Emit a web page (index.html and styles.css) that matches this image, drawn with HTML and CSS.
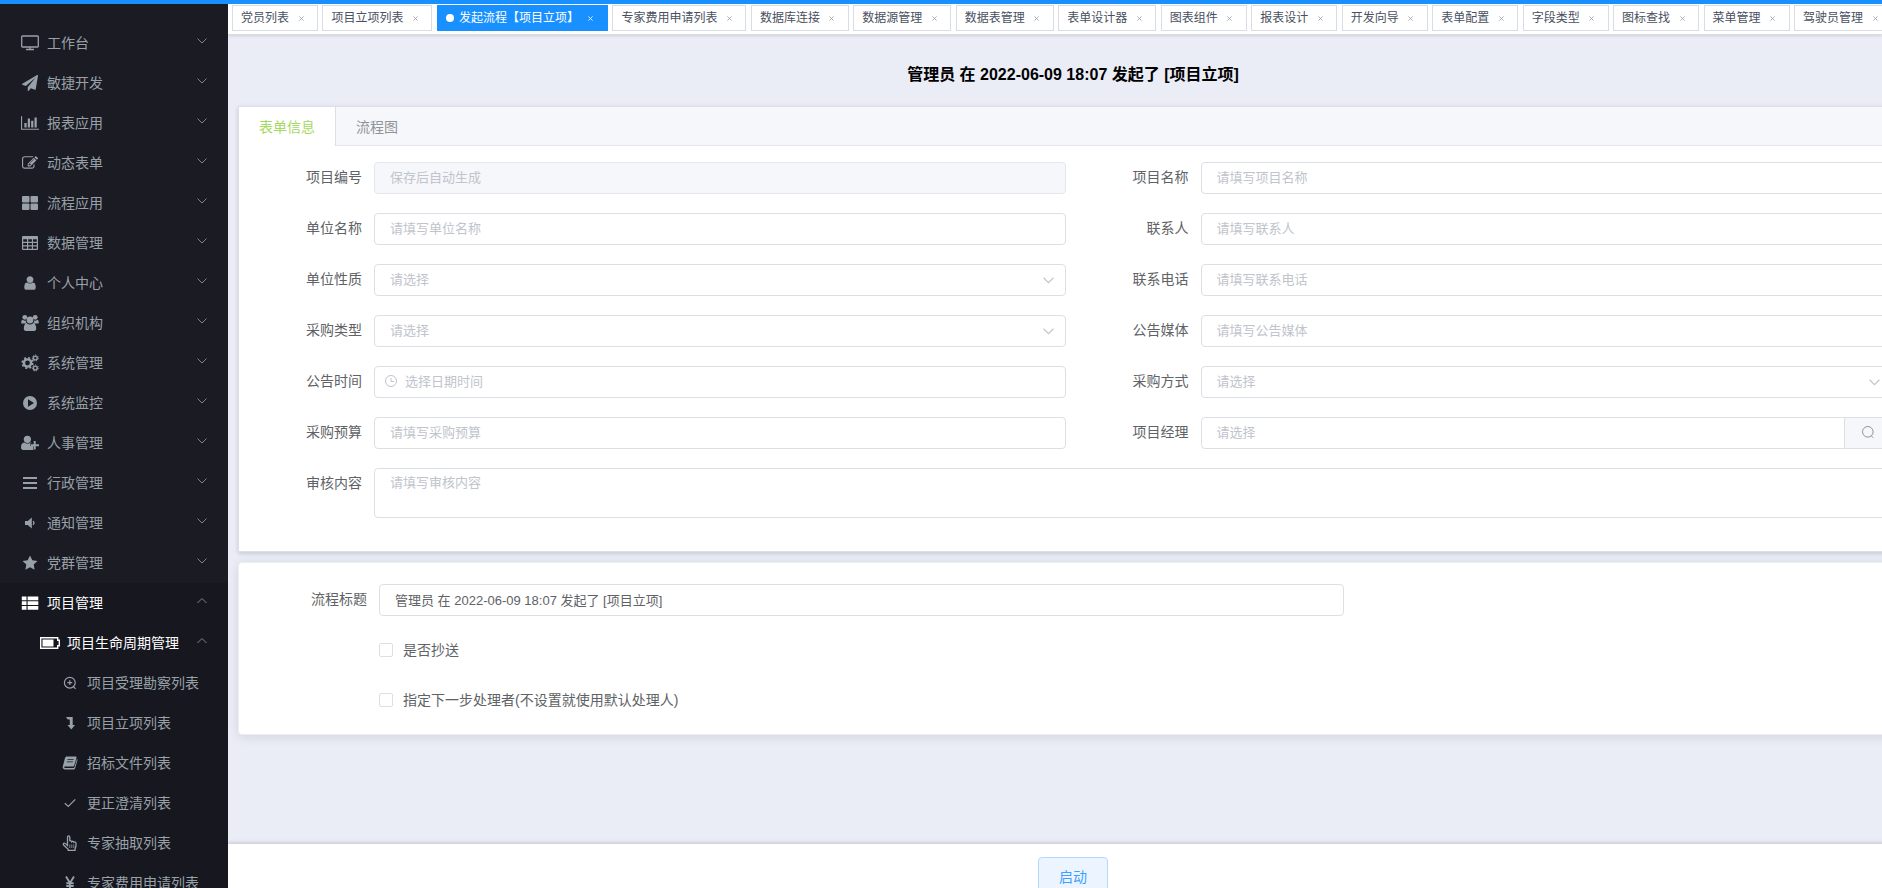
FILE: index.html
```html
<!DOCTYPE html>
<html lang="zh-CN">
<head>
  <meta charset="UTF-8" />
  <meta name="viewport" content="width=device-width, initial-scale=1.0"/>
  <title>发起流程【项目立项】</title>
  <link rel="stylesheet" href="styles.css">
</head>
<body>
  <svg class="sprite" aria-hidden="true">
    <symbol id="down" viewBox="0 0 10 6"><path d="M.5.5L5 5 9.500.5" fill="none" stroke="currentColor"/></symbol>
    <symbol id="up" viewBox="0 0 10 6"><path d="M.5 5L5 .5 9.500 5" fill="none" stroke="currentColor"/></symbol>
    <symbol id="close" viewBox="0 0 6 6"><path d="M.5.5l5 5M5.500.5l-5 5" fill="none" stroke="currentColor"/></symbol>
    <symbol id="search" viewBox="0 0 14 14"><circle cx="6.800" cy="6.800" r="5.300" fill="none" stroke="currentColor"/><path d="M10.300 10.800l2 2" fill="none" stroke="currentColor"/></symbol>
    <symbol id="clock" viewBox="0 0 14 14"><path d="M7 1.500a5.500 5.500 0 1 0 0 11a5.500 5.500 0 0 0 0-11M7 4v3.500h3" fill="none" stroke="currentColor"/></symbol>
  </svg>

  <div class="topbar"></div>
  <div class="app">
    <nav class="sidebar">
      <a href="#" class="item"><svg class="icon" viewBox="0 0 18 18"><path d="M1.500 2h15a.8.8 0 0 1 .8.8v9.400a.8.8 0 0 1-.8.8h-15a.8.8 0 0 1-.8-.8V2.800a.8.8 0 0 1 .8-.8zM9 13v2.500M5 15.500h8" fill="none" stroke="currentColor" stroke-width="1.300"/></svg><span>工作台</span><svg class="arrow"><use href="#down"/></svg></a>
      <a href="#" class="item"><svg class="icon fa" viewBox="0 0 1792 1792"><path d="M1764 11q33 24 27 64l-256 1536q-5 29-32 45-14 8-31 8-11 0-24-5l-453-185-242 295q-18 23-49 23-13 0-22-4-19-7-30.500-23.500t-11.500-36.500v-349l864-1059-1069 925-395-162q-37-14-40-55-2-40 32-59l1664-960q15-9 32-9 20 0 36 11z"/></svg><span>敏捷开发</span><svg class="arrow"><use href="#down"/></svg></a>
      <a href="#" class="item"><svg class="icon" viewBox="0 0 2048 1792"><path d="M640 896v512h-256v-512h256zm384-512v1024h-256v-1024h256zm1024 1152v128h-2048v-1536h128v1408h1920zm-640-896v768h-256v-768h256zm384-384v1152h-256v-1152h256z"/></svg><span>报表应用</span><svg class="arrow"><use href="#down"/></svg></a>
      <a href="#" class="item"><svg class="icon fa" viewBox="0 0 1792 1792"><path d="M888 1184l116-116-152-152-116 116v56h96v96h56zm440-720q-16-16-33 1l-350 350q-17 17-1 33t33-1l350-350q17-17 1-33zm80 594v190q0 119-84.500 203.500t-203.500 84.500h-832q-119 0-203.500-84.500t-84.500-203.500v-832q0-119 84.500-203.500t203.500-84.500h832q63 0 117 25 15 7 18 23 3 17-9 29l-49 49q-14 14-32 8-23-6-45-6h-832q-66 0-113 47t-47 113v832q0 66 47 113t113 47h832q66 0 113-47t47-113v-126q0-13 9-22l64-64q15-15 35-7t20 29zm-96-738l288 288-672 672h-288v-288zm444 132l-92 92-288-288 92-92q28-28 68-28t68 28l152 152q28 28 28 68t-28 68z"/></svg><span>动态表单</span><svg class="arrow"><use href="#down"/></svg></a>
      <a href="#" class="item"><svg class="icon" viewBox="0 0 18 18"><rect x="1" y="2" width="7.500" height="6.500" rx="1"/><rect x="9.500" y="2" width="7.500" height="6.500" rx="1"/><rect x="1" y="9.500" width="7.500" height="6.500" rx="1"/><rect x="9.500" y="9.500" width="7.500" height="6.500" rx="1"/></svg><span>流程应用</span><svg class="arrow"><use href="#down"/></svg></a>
      <a href="#" class="item"><svg class="icon" viewBox="0 0 18 18"><path fill-rule="evenodd" d="M2 2h14a1 1 0 0 1 1 1v12a1 1 0 0 1-1 1H2a1 1 0 0 1-1-1V3a1 1 0 0 1 1-1zM2.200 5.200v2.500h3.800v-2.500zM7.200 5.200v2.500h3.700v-2.500zM12 5.200v2.500h3.800v-2.500zM2.200 8.900v2.300h3.800v-2.300zM7.200 8.900v2.300h3.700v-2.300zM12 8.900v2.300h3.800v-2.300zM2.200 12.400v2.400h3.800v-2.400zM7.200 12.400v2.400h3.700v-2.400zM12 12.400v2.400h3.800v-2.400z"/></svg><span>数据管理</span><svg class="arrow"><use href="#down"/></svg></a>
      <a href="#" class="item"><svg class="icon fa" viewBox="0 0 1792 1792"><path d="M1536 1399q0 109-62.500 187t-150.500 78h-854q-88 0-150.500-78t-62.500-187q0-85 8.500-160.500t31.500-152 58.500-131 94-89 134.500-34.500q131 128 313 128t313-128q76 0 134.500 34.500t94 89 58.500 131 31.500 152 8.500 160.500zm-256-887q0 159-112.500 271.500t-271.500 112.500-271.500-112.500-112.500-271.500 112.500-271.500 271.500-112.500 271.500 112.500 112.500 271.500z"/></svg><span>个人中心</span><svg class="arrow"><use href="#down"/></svg></a>
      <a href="#" class="item"><svg class="icon" viewBox="0 0 18 18"><circle cx="3.800" cy="3.300" r="2.400"/><circle cx="14.200" cy="3.300" r="2.400"/><circle cx="9" cy="6" r="3.400"/><path d="M.2 9c0-2 .6-3.200 1.600-3.200 1 .8 2 1 3 .7 0 1.300.4 2.200 1.100 3H1.600C.8 9.500.2 9.400.2 9zM17.800 9c0-2-.6-3.200-1.600-3.200-1 .8-2 1-3 .7 0 1.300-.4 2.200-1.100 3h4.300c.8 0 1.400-.1 1.400-.5zM5.800 9.300c2 1.700 4.400 1.700 6.400 0 2 0 3 2.400 3 5.500 0 1.300-.8 2.200-2 2.200H4.800c-1.200 0-2-.9-2-2.200 0-3.100 1-5.500 3-5.500z"/></svg><span>组织机构</span><svg class="arrow"><use href="#down"/></svg></a>
      <a href="#" class="item"><svg class="icon" viewBox="0 0 18 18" fill="none" stroke="currentColor"><circle cx="6.500" cy="9" r="3.600" stroke-width="2.400"/><circle cx="6.500" cy="9" r="5.300" stroke-width="1.600" stroke-dasharray="2.080"/><circle cx="14.300" cy="4" r="1.900" stroke-width="1.400"/><circle cx="14.300" cy="4" r="3" stroke-width="1" stroke-dasharray="1.350 1.340"/><circle cx="14.300" cy="14" r="1.900" stroke-width="1.400"/><circle cx="14.300" cy="14" r="3" stroke-width="1" stroke-dasharray="1.350 1.340"/></svg><span>系统管理</span><svg class="arrow"><use href="#down"/></svg></a>
      <a href="#" class="item"><svg class="icon" viewBox="0 0 18 18"><path fill-rule="evenodd" d="M9 2a7 7 0 1 0 0 14A7 7 0 0 0 9 2zM7 5.300L13 9l-6 3.700z"/></svg><span>系统监控</span><svg class="arrow"><use href="#down"/></svg></a>
      <a href="#" class="item"><svg class="icon" viewBox="0 0 18 18"><circle cx="6.400" cy="5.300" r="3.600"/><path d="M3.300 8.400c2 1.600 4.200 1.600 6.200 0 .8.100 1 .3 1.300.6H9.300v3.300h2.900V16H2.300C.9 16 0 15 0 13.500c0-3 1-5.100 3.300-5.100zM12.700 7h2v3.200H18v2h-3.300v3.300h-2v-3.300H9.800v-2h2.900z"/></svg><span>人事管理</span><svg class="arrow"><use href="#down"/></svg></a>
      <a href="#" class="item"><svg class="icon" viewBox="0 0 18 18"><path d="M2 3h14v2H2zM2 8h14v2H2zM2 13h14v2H2z"/></svg><span>行政管理</span><svg class="arrow"><use href="#down"/></svg></a>
      <a href="#" class="item"><svg class="icon" viewBox="0 0 18 18"><path d="M4 7h2.800l4-3.500v11L6.800 11H4z"/><path d="M12 7.300q2 1.700 0 3.400" fill="none" stroke="currentColor" stroke-width="1.300"/></svg><span>通知管理</span><svg class="arrow"><use href="#down"/></svg></a>
      <a href="#" class="item"><svg class="icon" viewBox="0 0 18 18"><path d="M9 1.500l2.300 4.800 5.200.7-3.800 3.600.9 5.200L9 13.300l-4.600 2.500.9-5.200L1.500 7l5.200-.7z"/></svg><span>党群管理</span><svg class="arrow"><use href="#down"/></svg></a>
      <div class="group">
        <a href="#" class="item active"><svg class="icon" viewBox="0 0 18 18"><path d="M.8 2.500h4.700v3.700H.8zM6.600 2.500h10.700v3.700H6.600zM.8 7.200h4.700v3.700H.8zM6.600 7.200h10.700v3.700H6.600zM.8 12h4.700v3.700H.8zM6.600 12h10.700v3.700H6.600z"/></svg><span>项目管理</span><svg class="arrow"><use href="#up"/></svg></a>
        <a href="#" class="item sub active"><svg class="icon wide" viewBox="0 0 22 14"><path d="M1.700 1.700h17v2.600h1.600v5.400h-1.600v2.600h-17z" fill="none" stroke="currentColor" stroke-width="1.400"/><path d="M3.500 3.500h11v7h-11z"/></svg><span>项目生命周期管理</span><svg class="arrow"><use href="#up"/></svg></a>
        <a href="#" class="item leaf"><svg class="icon" viewBox="0 0 18 18"><g fill="none" stroke="currentColor" stroke-width="1.200"><circle cx="8.800" cy="8.700" r="5.400"/><path d="M12.400 12.700l2.200 2.200M8.800 6.300v4.800M6.400 8.700h4.800"/></g></svg><span>项目受理勘察列表</span></a>
        <a href="#" class="item leaf"><svg class="icon" viewBox="0 0 18 18"><path d="M5 3h6.700v8H14l-3.700 4.500L6.500 11h2.300V5.500H6.800z"/></svg><span>项目立项列表</span></a>
        <a href="#" class="item leaf"><svg class="icon" viewBox="0 0 18 18"><path fill-rule="evenodd" d="M6 2.500h8.500c.9 0 1.200.6 1 1.400l-2.200 7.300c-.3.900-.7 1.300-1.600 1.300H3.800c-.8 0-.8 1.500.2 1.500h8.200c.7 0 1.100-.3 1.300-1l2.500-8c.6.300.6.900.4 1.500l-2.200 7.400c-.3.900-.9 1.600-2 1.600H4c-1.600 0-2.700-1.500-2.200-3L4 4c.3-.9.900-1.500 2-1.500zM6.700 5.200l-.3.900h6l.3-.9zM6 7.400l-.3.900h6l.3-.9z"/></svg><span>招标文件列表</span></a>
        <a href="#" class="item leaf"><svg class="icon" viewBox="0 0 18 18"><path d="M3.800 9.300l3.500 3.200 7-7.200" fill="none" stroke="currentColor" stroke-width="1.200"/></svg><span>更正澄清列表</span></a>
        <a href="#" class="item leaf"><svg class="icon" viewBox="0 0 18 18"><path d="M6.500 11.500V3.200c0-1.800 2.300-1.800 2.300 0v4.100c.4-.8 1.900-.6 2 .4.500-.7 1.900-.5 2 .5.900-.7 2.200-.2 2.200 1.100v2.500l-1 3.200v1.400H7.200v-1L2.600 11c-1-1.400.8-2.600 1.900-1.400z" fill="none" stroke="currentColor" stroke-width="1.300"/><path d="M8.800 10.500v3.500M10.800 10.500v3.500M12.800 10.500v3.500" stroke="currentColor" stroke-width=".8"/></svg><span>专家抽取列表</span></a>
        <a href="#" class="item leaf"><svg class="icon" viewBox="0 0 18 18"><path d="M5 2.500l4 6.500 4-6.500M9 9v7M5.300 9.300h7.400M5.300 12h7.400" fill="none" stroke="currentColor" stroke-width="1.900"/></svg><span>专家费用申请列表</span></a>
      </div>
    </nav>

    <main class="main">
      <div class="tags">
        <span class="tag">党员列表<button aria-label="关闭"><svg><use href="#close"/></svg></button></span>
        <span class="tag">项目立项列表<button aria-label="关闭"><svg><use href="#close"/></svg></button></span>
        <span class="tag current">发起流程【项目立项】<button aria-label="关闭"><svg><use href="#close"/></svg></button></span>
        <span class="tag">专家费用申请列表<button aria-label="关闭"><svg><use href="#close"/></svg></button></span>
        <span class="tag">数据库连接<button aria-label="关闭"><svg><use href="#close"/></svg></button></span>
        <span class="tag">数据源管理<button aria-label="关闭"><svg><use href="#close"/></svg></button></span>
        <span class="tag">数据表管理<button aria-label="关闭"><svg><use href="#close"/></svg></button></span>
        <span class="tag">表单设计器<button aria-label="关闭"><svg><use href="#close"/></svg></button></span>
        <span class="tag">图表组件<button aria-label="关闭"><svg><use href="#close"/></svg></button></span>
        <span class="tag">报表设计<button aria-label="关闭"><svg><use href="#close"/></svg></button></span>
        <span class="tag">开发向导<button aria-label="关闭"><svg><use href="#close"/></svg></button></span>
        <span class="tag">表单配置<button aria-label="关闭"><svg><use href="#close"/></svg></button></span>
        <span class="tag">字段类型<button aria-label="关闭"><svg><use href="#close"/></svg></button></span>
        <span class="tag">图标查找<button aria-label="关闭"><svg><use href="#close"/></svg></button></span>
        <span class="tag">菜单管理<button aria-label="关闭"><svg><use href="#close"/></svg></button></span>
        <span class="tag">驾驶员管理<button aria-label="关闭"><svg><use href="#close"/></svg></button></span>
      </div>

      <div class="content">
        <h1>管理员 在 2022-06-09 18:07 发起了 [项目立项]</h1>

        <section class="panel">
          <div class="tabs">
            <button class="tab selected">表单信息</button>
            <button class="tab">流程图</button>
          </div>
          <form class="form">
            <div class="field"><label for="code">项目编号</label><input id="code" type="text" placeholder="保存后自动生成" disabled></div>
            <div class="field"><label for="name">项目名称</label><input id="name" type="text" placeholder="请填写项目名称"></div>
            <div class="field"><label for="unit">单位名称</label><input id="unit" type="text" placeholder="请填写单位名称"></div>
            <div class="field"><label for="contact">联系人</label><input id="contact" type="text" placeholder="请填写联系人"></div>
            <div class="field"><label for="nature">单位性质</label><div class="control"><select id="nature"><option>请选择</option></select><svg class="caret"><use href="#down"/></svg></div></div>
            <div class="field"><label for="phone">联系电话</label><input id="phone" type="text" placeholder="请填写联系电话"></div>
            <div class="field"><label for="kind">采购类型</label><div class="control"><select id="kind"><option>请选择</option></select><svg class="caret"><use href="#down"/></svg></div></div>
            <div class="field"><label for="media">公告媒体</label><input id="media" type="text" placeholder="请填写公告媒体"></div>
            <div class="field"><label for="time">公告时间</label><div class="control"><input id="time" class="date" type="text" placeholder="选择日期时间"><svg class="clock"><use href="#clock"/></svg></div></div>
            <div class="field"><label for="way">采购方式</label><div class="control"><select id="way"><option>请选择</option></select><svg class="caret"><use href="#down"/></svg></div></div>
            <div class="field"><label for="budget">采购预算</label><input id="budget" type="text" placeholder="请填写采购预算"></div>
            <div class="field"><label for="manager">项目经理</label><div class="control group-input"><input id="manager" type="text" placeholder="请选择"><button type="button" class="append" aria-label="选择项目经理"><svg><use href="#search"/></svg></button></div></div>
            <div class="field full"><label for="audit">审核内容</label><textarea id="audit" placeholder="请填写审核内容"></textarea></div>
          </form>
        </section>

        <section class="card">
          <div class="field"><label for="title">流程标题</label><input id="title" type="text" value="管理员 在 2022-06-09 18:07 发起了 [项目立项]"></div>
          <label class="check"><input type="checkbox"><span>是否抄送</span></label>
          <label class="check"><input type="checkbox"><span>指定下一步处理者(不设置就使用默认处理人)</span></label>
        </section>
      </div>

      <footer class="footer"><button class="start">启动</button></footer>
    </main>
  </div>
</body>
</html>
```
FILE: styles.css
```css
* {
  box-sizing: border-box;
}
body {
  margin: 0;
  height: 100vh;
  overflow: hidden;
  display: flex;
  flex-direction: column;
  font-family: "Liberation Sans", "Noto Sans CJK SC", sans-serif;
  font-size: 14px;
  color: #606266;
}
button, input, select, textarea {
  font-family: inherit;
}
button {
  cursor: pointer;
}
.sprite {
  display: none;
}
.topbar {
  flex: none;
  height: 4px;
  background: #1890ff;
}
.app {
  flex: 1;
  min-height: 0;
  display: flex;
}

/* sidebar */
.sidebar {
  flex: none;
  width: 228px;
  padding-top: 19px;
  background: #1b1b24;
  overflow: hidden;
}
.item {
  display: flex;
  align-items: center;
  height: 40px;
  padding: 0 21px 0 18px;
  color: #98a1a8;
  text-decoration: none;
  white-space: nowrap;
}
.item span {
  flex: 1;
  margin-left: 5px;
  padding-bottom: 2px;
}
.icon {
  flex: none;
  width: 18px;
  height: 18px;
  margin: 0 3px;
  fill: currentColor;
}
.icon[fill="none"] {
  fill: none;
}
.icon.fa {
  width: 16px;
  height: 16px;
  margin: 0 4px;
}
.icon.wide {
  width: 22px;
  height: 14px;
  margin: 0 1px;
}
.arrow {
  width: 10px;
  height: 6px;
  margin-bottom: 4px;
  color: #7d858c;
}
.group {
  background: #17171f;
}
.item.sub {
  padding-left: 38px;
}
.item.leaf {
  padding-left: 58px;
}
.item.active {
  color: #fff;
}

/* opened pages */
.main {
  flex: 1;
  min-width: 0;
  display: flex;
  flex-direction: column;
  background: #eaedf6;
  overflow: hidden;
}
.tags {
  flex: none;
  height: 31px;
  padding: 1px 0 0 4px;
  background: #fff;
  border-bottom: 1px solid #d8dce5;
  box-shadow: 0 1px 3px rgba(0,0,0,0.12);
  font-size: 16px;
  white-space: nowrap;
}
.tag {
  display: inline-flex;
  align-items: center;
  height: 26px;
  padding: 0 8px;
  border: 1px solid #d8dce5;
  background: #fff;
  color: #495060;
  font-size: 12px;
  line-height: 22px;
  vertical-align: top;
}
.tag button {
  display: flex;
  align-items: center;
  justify-content: center;
  width: 16px;
  height: 16px;
  margin-left: 4px;
  padding: 0;
  border: none;
  background: none;
  color: #999da8;
}
.tag button svg {
  width: 5px;
  height: 5px;
}
.tag.current {
  background: #1890ff;
  border-color: #1890ff;
  color: #fff;
}
.tag.current::before {
  content: "";
  width: 8px;
  height: 8px;
  margin-right: 5px;
  border-radius: 50%;
  background: #fff;
}
.tag.current button {
  color: #fff;
}

/* the form is wider than the visible area */
.content {
  flex: 1;
  min-height: 0;
  margin-right: -36px;
  padding: 0 10px;
}
h1 {
  margin: 28px 0 20px;
  font-size: 16px;
  line-height: 23px;
  text-align: center;
  color: #000;
}
.panel {
  background: #fff;
  border: 1px solid #dcdfe6;
  box-shadow: 0 2px 4px rgba(0,0,0,0.12), 0 0 6px rgba(0,0,0,0.04);
}
.tabs {
  display: flex;
  height: 39px;
  background: #f5f7fa;
  border-bottom: 1px solid #e4e7ed;
}
.tab {
  height: 39px;
  padding: 0 20px 2px;
  border: none;
  background: none;
  font-size: 14px;
  color: #909399;
}
.tab.selected {
  background: #fff;
  border-right: 1px solid #dcdfe6;
  color: #a4da5f;
}
.form {
  display: grid;
  grid-template-columns: 1fr 1fr;
  gap: 19px 15px;
  padding: 16px 15px 33px;
}
.field {
  display: flex;
}
.field.full {
  grid-column: 1 / 3;
}
.field label {
  flex: none;
  width: 120px;
  padding-right: 12px;
  line-height: 30px;
  text-align: right;
}
.control {
  flex: 1;
  display: flex;
  position: relative;
}
.field input, .field select, .field textarea {
  flex: 1;
  min-width: 0;
  height: 32px;
  padding: 0 15px 2px;
  border: 1px solid #dcdfe6;
  border-radius: 4px;
  background: #fff;
  font-size: 13px;
  color: #606266;
  outline: none;
}
.field select {
  appearance: none;
  color: #c0c4cc;
}
.field textarea {
  height: 50px;
  padding: 4px 15px;
  line-height: 20px;
  resize: none;
}
.field input:disabled {
  background: #f5f7fa;
  border-color: #e4e7ed;
}
.field ::placeholder {
  color: #c0c4cc;
}
.field .date {
  padding-left: 30px;
}
.caret {
  position: absolute;
  right: 12px;
  top: 13px;
  width: 11px;
  height: 7px;
  color: #c0c4cc;
}
.clock {
  position: absolute;
  left: 10px;
  top: 8px;
  width: 14px;
  height: 14px;
  color: #c0c4cc;
}
.group-input input {
  border-radius: 4px 0 0 4px;
}
.append {
  display: flex;
  align-items: center;
  justify-content: center;
  width: 47px;
  padding: 0 0 2px;
  border: 1px solid #dcdfe6;
  border-left: none;
  border-radius: 0 4px 4px 0;
  background: #f5f7fa;
  color: #909399;
}
.append svg {
  width: 14px;
  height: 14px;
}
.card {
  display: grid;
  grid-template-columns: 2fr 1fr;
  row-gap: 18px;
  margin-top: 10px;
  padding: 21px 20px 18px;
  background: #fff;
  border: 1px solid #ebeef5;
  border-radius: 4px;
  box-shadow: 0 2px 12px rgba(0,0,0,0.1);
}
.check {
  grid-column: 1;
  display: flex;
  align-items: center;
  gap: 10px;
  height: 32px;
  padding-left: 120px;
}
.check span {
  padding-bottom: 2px;
}
.check input {
  appearance: none;
  width: 14px;
  height: 14px;
  margin: 0;
  border: 1px solid #dcdfe6;
  border-radius: 2px;
  background: #fff;
}
.check input:checked {
  background: #1890ff;
}

.footer {
  flex: none;
  height: 44px;
  margin-right: -36px;
  padding-top: 13px;
  background: #fff;
  box-shadow: 0 -1px 4px rgba(0,0,0,0.18);
  text-align: center;
}
.start {
  height: 40px;
  padding: 0 20px 2px;
  border: 1px solid #b3d8ff;
  border-radius: 4px;
  background: #ecf5ff;
  color: #409eff;
  font-size: 14px;
}
```
